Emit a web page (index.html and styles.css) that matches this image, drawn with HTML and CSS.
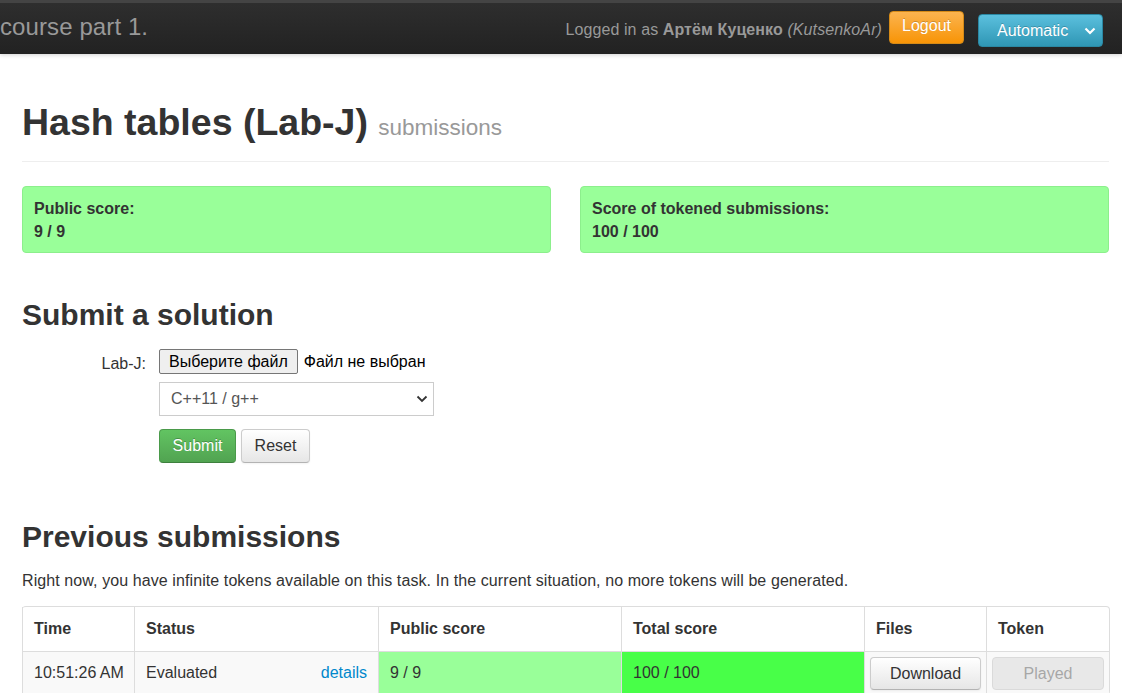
FILE: index.html
```html
<!DOCTYPE html>
<html lang="en">
<head>
<meta charset="utf-8">
<title>Hash tables (Lab-J) submissions</title>
<link rel="stylesheet" href="styles.css">
</head>
<body>
<nav class="navbar">
  <div class="brand">course part 1.</div>
  <div class="nav-right">
    <span class="user">Logged in as <b>Артём Куценко</b> <i>(KutsenkoAr)</i></span>
    <button class="btn-logout" type="button">Logout</button>
    <div class="btn-auto">
      <span>Automatic</span>
      <svg class="chev-white" width="12" height="8" viewBox="0 0 12 8"><polyline points="1.5,1.5 6,6 10.5,1.5" fill="none" stroke="#fff" stroke-width="2.2"/></svg>
    </div>
  </div>
</nav>
<main class="container">
  <div class="page-header">
    <h1>Hash tables (Lab-J) <small>submissions</small></h1>
  </div>
  <div class="scores">
    <div class="score-box"><b>Public score:</b><br><b>9 / 9</b></div>
    <div class="score-box"><b>Score of tokened submissions:</b><br><b>100 / 100</b></div>
  </div>

  <h2 class="section-title first">Submit a solution</h2>
  <form class="submit-form">
    <label class="control-label">Lab-J:</label>
    <div class="controls">
      <div class="file-row">
        <span class="file-btn">Выберите файл</span>
        <span class="file-name">Файл не выбран</span>
      </div>
      <div class="select-box">
        <span>C++11 / g++</span>
        <svg width="12" height="8" viewBox="0 0 12 8"><polyline points="1.5,1.5 6,6 10.5,1.5" fill="none" stroke="#333" stroke-width="1.8"/></svg>
      </div>
      <div class="form-actions">
        <button class="btn btn-success" type="button">Submit</button>
        <button class="btn btn-default" type="button">Reset</button>
      </div>
    </div>
  </form>

  <h2 class="section-title second">Previous submissions</h2>
  <p class="tokens-note">Right now, you have infinite tokens available on this task. In the current situation, no more tokens will be generated.</p>

  <table class="subs">
    <colgroup>
      <col class="c-time"><col class="c-status"><col class="c-pub"><col class="c-total"><col class="c-files"><col class="c-token">
    </colgroup>
    <thead>
      <tr><th>Time</th><th>Status</th><th>Public score</th><th>Total score</th><th>Files</th><th>Token</th></tr>
    </thead>
    <tbody>
      <tr>
        <td>10:51:26 AM</td>
        <td><div class="status"><span>Evaluated</span><a href="#">details</a></div></td>
        <td class="pub-ok">9 / 9</td>
        <td class="total-ok">100 / 100</td>
        <td class="btn-cell"><span class="btn btn-default btn-block">Download</span></td>
        <td class="btn-cell"><span class="btn btn-default btn-block disabled">Played</span></td>
      </tr>
    </tbody>
  </table>
</main>
</body>
</html>
```
FILE: styles.css
```css
* { box-sizing: border-box; }
html, body { margin: 0; padding: 0; }
body {
  font-family: "Liberation Sans", Arial, sans-serif;
  font-size: 16px;
  line-height: 22px;
  color: #333;
  background: #fff;
}

/* navbar */
.navbar {
  height: 54px;
  border-top: 3px solid #444;
  background: linear-gradient(#2e2e2e, #222);
  box-shadow: 0 1px 4px rgba(0,0,0,.18);
  display: flex;
  justify-content: space-between;
  align-items: flex-start;
  padding-right: 19px;
}
.brand {
  font-size: 24px;
  line-height: 28px;
  color: #999;
  margin-top: 10px;
  letter-spacing: 0.1px;
}
.nav-right {
  display: flex;
  align-items: flex-start;
}
.user {
  color: #999;
  margin-top: 16px;
  letter-spacing: 0.1px;
}
.user b { color: #999; }
.btn-logout {
  font-family: inherit;
  font-size: 16px;
  color: #fff;
  width: 75px;
  height: 33px;
  margin-top: 8px;
  margin-left: 7px;
  padding: 0 0 3px;
  border: 1px solid #d58a17;
  border-radius: 4px;
  background: linear-gradient(#fbb450, #f89406);
  text-shadow: 0 -1px 0 rgba(0,0,0,.2);
}
.btn-auto {
  width: 125px;
  height: 33px;
  margin-top: 11px;
  margin-left: 14px;
  padding: 0 6px 0 18px;
  border: 1px solid #2a88a3;
  border-radius: 4px;
  background: linear-gradient(#5bc0de, #2f96b4);
  color: #fff;
  display: flex;
  align-items: center;
  justify-content: space-between;
  text-shadow: 0 -1px 0 rgba(0,0,0,.2);
}

/* content */
.container {
  padding: 0 13px 0 22px;
}
.page-header {
  margin-top: 48px;
  padding-bottom: 19px;
  border-bottom: 1px solid #eee;
}
h1 {
  margin: 0;
  font-size: 37.5px;
  line-height: 40px;
  font-weight: bold;
}
h1 small {
  font-size: 22.5px;
  line-height: 0;
  font-weight: normal;
  color: #999;
}
.scores {
  margin-top: 24px;
  display: grid;
  grid-template-columns: 1fr 1fr;
  gap: 29px;
}
.score-box {
  height: 67px;
  padding: 10px 11px 9px;
  line-height: 23px;
  background: #99ff99;
  border: 1px solid #8cef8c;
  border-radius: 4px;
}
.section-title {
  margin: 0;
  font-size: 30px;
  line-height: 40px;
  font-weight: bold;
}
.section-title.first { margin-top: 42px; }
.section-title.second { margin-top: 54px; }

.submit-form {
  margin-top: 14px;
  display: grid;
  grid-template-columns: 124px auto;
  column-gap: 13px;
  justify-content: start;
}
.control-label {
  text-align: right;
  padding-top: 4px;
}
.controls {
  display: flex;
  flex-direction: column;
  align-items: flex-start;
}
.file-row {
  display: flex;
  align-items: center;
  height: 25px;
}
.file-btn {
  height: 25px;
  line-height: 23px;
  padding: 0 9px;
  border: 1px solid #767676;
  border-radius: 2px;
  background: #efefef;
  color: #000;
}
.file-name {
  margin-left: 6px;
  color: #000;
}
.select-box {
  margin-top: 8px;
  width: 275px;
  height: 34px;
  border: 1px solid #ccc;
  display: flex;
  align-items: center;
  justify-content: space-between;
  padding: 0 5px 0 11px;
  color: #555;
  background: #fff;
}
.form-actions {
  margin-top: 13px;
  display: flex;
  gap: 5px;
}
.btn {
  display: inline-block;
  font-family: inherit;
  font-size: 16px;
  line-height: 22px;
  height: 34px;
  padding: 5px 12px;
  border-radius: 4px;
  text-align: center;
  cursor: pointer;
}
.btn-success {
  color: #fff;
  width: 77px;
  background: linear-gradient(#62c462, #51a351);
  border: 1px solid #4a9a4a;
  border-bottom-color: #3d803d;
  text-shadow: 0 -1px 0 rgba(0,0,0,.25);
}
.btn-default {
  color: #333;
  background: linear-gradient(#fff, #e6e6e6);
  border: 1px solid #ccc;
  border-bottom-color: #b3b3b3;
  box-shadow: inset 0 1px 0 rgba(255,255,255,.2), 0 1px 2px rgba(0,0,0,.05);
}
.form-actions .btn-default { width: 69px; }

.tokens-note {
  margin: 13px 0 0;
  letter-spacing: 0.09px;
}

/* table */
.subs {
  margin-top: 14px;
  width: 1087px;
  border-collapse: separate;
  border-spacing: 0;
  border: 1px solid #ddd;
  border-left: 0;
  border-radius: 4px;
  table-layout: fixed;
}
.c-time { width: 112px; }
.c-status { width: 244px; }
.c-pub { width: 243px; }
.c-total { width: 243px; }
.c-files { width: 122px; }
.c-token { width: 123px; }
.subs th, .subs td {
  text-align: left;
  border-left: 1px solid #ddd;
  vertical-align: middle;
  white-space: nowrap;
}
.subs th {
  padding: 11px 11px;
  font-weight: bold;
}
.subs td {
  border-top: 1px solid #ddd;
  padding: 10px 11px;
  background: #f9f9f9;
}
.status {
  display: flex;
  justify-content: space-between;
}
.status a {
  color: #0088cc;
  text-decoration: none;
}
.subs td.pub-ok { background: #99ff99; }
.subs td.total-ok { background: #48ff48; }
.subs td.btn-cell { padding: 3px 5px; }
.btn-block {
  display: block;
  width: 100%;
  height: 33px;
}
.btn.disabled {
  color: #999;
  background: #e6e6e6;
  border-color: #d5d5d5;
  box-shadow: none;
  opacity: .85;
}
```
